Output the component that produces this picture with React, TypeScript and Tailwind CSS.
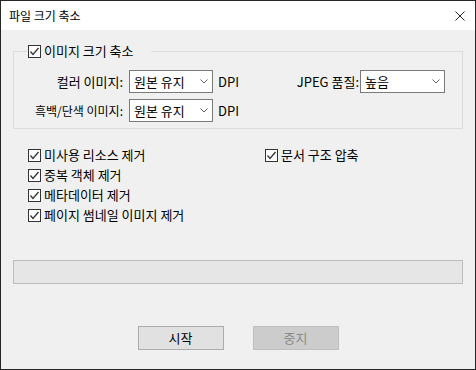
import React from 'react'

const FONT = "font-['Malgun_Gothic','Noto_Sans_CJK_KR',sans-serif]"

function CheckBox({ label }: { label: string }) {
  return (
    <div className="flex items-center h-[20px]">
      <span className="w-[13px] h-[13px] border border-[#333333] bg-white flex items-center justify-center">
        <svg width="11" height="11" viewBox="0 0 11 11">
          <path d="M1.5 5.5 L4 8.5 L9.5 2" fill="none" stroke="#333333" strokeWidth="1.3" />
        </svg>
      </span>
      <span className="ml-[3px] leading-[16px]">{label}</span>
    </div>
  )
}

function Combo({ value, width }: { value: string; width: string }) {
  return (
    <div className={`${width} h-[23px] border border-[#7a7a7a] bg-white flex items-center justify-between pl-[4px] pr-[4px]`}>
      <span className="leading-[16px]">{value}</span>
      <svg width="8" height="5" viewBox="0 0 8 5">
        <path d="M0.5 0.5 L4 4 L7.5 0.5" fill="none" stroke="#606060" strokeWidth="1" />
      </svg>
    </div>
  )
}

export default function App() {
  return (
    <div className={`w-[476px] h-[370px] border border-[#262626] bg-[#f0f0f0] flex flex-col text-[13px] text-black ${FONT}`}>
      {/* Title bar */}
      <div className="h-[29px] bg-white flex items-center justify-between pl-[8px] pr-[10px]">
        <span className="text-[12px] leading-[16px]">파일 크기 축소</span>
        <svg width="10" height="10" viewBox="0 0 10 10">
          <path d="M0.5 0.5 L9.5 9.5 M9.5 0.5 L0.5 9.5" stroke="#222222" strokeWidth="1" />
        </svg>
      </div>

      <div className="flex-1 px-[12px] pt-[21px]">
        {/* Image group */}
        <div className="relative border border-[#dcdcdc] pt-[18px] pb-[6px] flex flex-col gap-[6px]">
          <div className="absolute -top-[9px] left-[13px] h-[16px] bg-[#f0f0f0] pl-px pr-[17px] flex items-center">
            <span className="w-[13px] h-[13px] border border-[#333333] bg-white flex items-center justify-center">
              <svg width="11" height="11" viewBox="0 0 11 11">
                <path d="M1.5 5.5 L4 8.5 L9.5 2" fill="none" stroke="#333333" strokeWidth="1.3" />
              </svg>
            </span>
            <span className="ml-[3px] leading-[16px]">이미지 크기 축소</span>
          </div>

          <div className="flex items-center h-[23px]">
            <span className="w-[109px] text-right leading-[16px]">컬러 이미지:</span>
            <div className="ml-[6px]"><Combo value="원본 유지" width="w-[84px]" /></div>
            <span className="ml-[5px] leading-[16px]">DPI</span>
            <span className="ml-auto leading-[16px]">JPEG 품질:</span>
            <div className="ml-[1px] mr-[17px]"><Combo value="높음" width="w-[85px]" /></div>
          </div>
          <div className="flex items-center h-[23px]">
            <span className="w-[109px] text-right text-[12px] leading-[16px]">흑백/단색 이미지:</span>
            <div className="ml-[6px]"><Combo value="원본 유지" width="w-[84px]" /></div>
            <span className="ml-[5px] leading-[16px]">DPI</span>
          </div>
        </div>

        {/* Options */}
        <div className="mt-[16px] pl-[15px] grid grid-cols-[237px_1fr]">
          <div className="flex flex-col">
            <CheckBox label="미사용 리소스 제거" />
            <CheckBox label="중복 객체 제거" />
            <CheckBox label="메타데이터 제거" />
            <CheckBox label="페이지 썸네일 이미지 제거" />
          </div>
          <div className="flex flex-col">
            <CheckBox label="문서 구조 압축" />
          </div>
        </div>

        {/* Progress */}
        <div className="mt-[35px] h-[24px] border border-[#bcbcbc] bg-[#e6e6e6]" />

        {/* Buttons */}
        <div className="mt-[42px] flex justify-center gap-[29px]">
          <button className="w-[86px] h-[24px] border border-[#adadad] bg-[#e1e1e1] leading-[16px]">시작</button>
          <button disabled className="w-[86px] h-[24px] border border-[#bfbfbf] bg-[#cccccc] text-[#8a8a8a] leading-[16px]">중지</button>
        </div>
      </div>
    </div>
  )
}
